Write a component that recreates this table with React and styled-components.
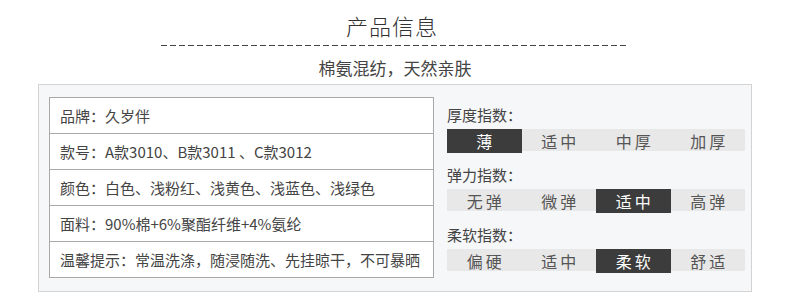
import React from 'react';
import styled, { createGlobalStyle } from 'styled-components';

const GlobalStyle = createGlobalStyle`
    html, body {
        margin: 0;
        padding: 0;
        background: #ffffff;
    }
    body {
        font-family: "Noto Sans CJK SC", "Noto Sans", sans-serif;
        color: #444444;
    }
`;

const details = [
    '品牌：久岁伴',
    '款号：A款3010、B款3011 、C款3012',
    '颜色：白色、浅粉红、浅黄色、浅蓝色、浅绿色',
    '面料：90%棉+6%聚酯纤维+4%氨纶',
    '温馨提示：常温洗涤，随浸随洗、先挂晾干，不可暴晒',
];

const indexes = [
    { label: '厚度指数：', options: ['薄', '适中', '中厚', '加厚'], active: 0 },
    { label: '弹力指数：', options: ['无弹', '微弹', '适中', '高弹'], active: 2 },
    { label: '柔软指数：', options: ['偏硬', '适中', '柔软', '舒适'], active: 2 },
];

const App = () => {
    return (
        <>
            <GlobalStyle />
            <Page>
                <Title>产品信息</Title>
                <Dashes />
                <Subtitle>棉氨混纺，天然亲肤</Subtitle>
                <Panel>
                    <InfoTable>
                        {details.map(text => (
                            <InfoRow key={text}>{text}</InfoRow>
                        ))}
                    </InfoTable>
                    <Indexes>
                        {indexes.map((group, i) => (
                            <div key={group.label}>
                                <IndexLabel $first={i === 0}>{group.label}</IndexLabel>
                                <Scale>
                                    {group.options.map((opt, j) => (
                                        <ScaleCell key={opt} $active={j === group.active}>{opt}</ScaleCell>
                                    ))}
                                </Scale>
                            </div>
                        ))}
                    </Indexes>
                </Panel>
            </Page>
        </>
    );
}

const Page = styled.div`
    width: 790px;
    padding-top: 10px;
    display: flex;
    flex-direction: column;
    align-items: center;
`;

const Title = styled.div`
    font-size: 22px;
    font-weight: 300;
    line-height: 30px;
    color: #333333;
    letter-spacing: 1px;
    margin-right: 6px;
`;

const Dashes = styled.div`
    width: 465px;
    height: 1px;
    margin-top: 5px;
    margin-right: 3px;
    background: repeating-linear-gradient(90deg, #444444 0 6px, transparent 6px 9px);
`;

const Subtitle = styled.div`
    margin-top: 10px;
    font-size: 17px;
    line-height: 24px;
    color: #444444;
`;

const Panel = styled.div`
    box-sizing: border-box;
    width: 714px;
    margin-top: 4px;
    padding: 12px 6px 13px 10px;
    border: 1px solid #d3d3d3;
    background: #f6f7f9;
    display: grid;
    grid-template-columns: 385px 298px;
    column-gap: 13px;
    align-items: start;
`;

const InfoTable = styled.div`
    box-sizing: border-box;
    border: 1px solid #a8a8a8;
    background: #ffffff;
`;

const InfoRow = styled.div`
    height: 35px;
    padding-left: 10px;
    display: flex;
    align-items: center;
    font-size: 15px;
    color: #444444;
    white-space: nowrap;

    & + & {
        border-top: 1px solid #a8a8a8;
    }
`;

const Indexes = styled.div`
    display: flex;
    flex-direction: column;
`;

const IndexLabel = styled.div`
    margin-top: ${p => (p.$first ? '4px' : '10px')};
    height: 28px;
    line-height: 28px;
    font-size: 15px;
    color: #444444;
`;

const Scale = styled.div`
    display: grid;
    grid-template-columns: repeat(4, 1fr);
    height: 22px;
    background: #e8e8e8;
`;

const ScaleCell = styled.div`
    display: flex;
    align-items: center;
    justify-content: center;
    font-size: 16px;
    letter-spacing: 3px;
    padding-left: 3px;
    color: ${p => (p.$active ? '#ffffff' : '#555555')};
    background: ${p => (p.$active ? '#3c3c3c' : 'transparent')};
`;

export default App;
